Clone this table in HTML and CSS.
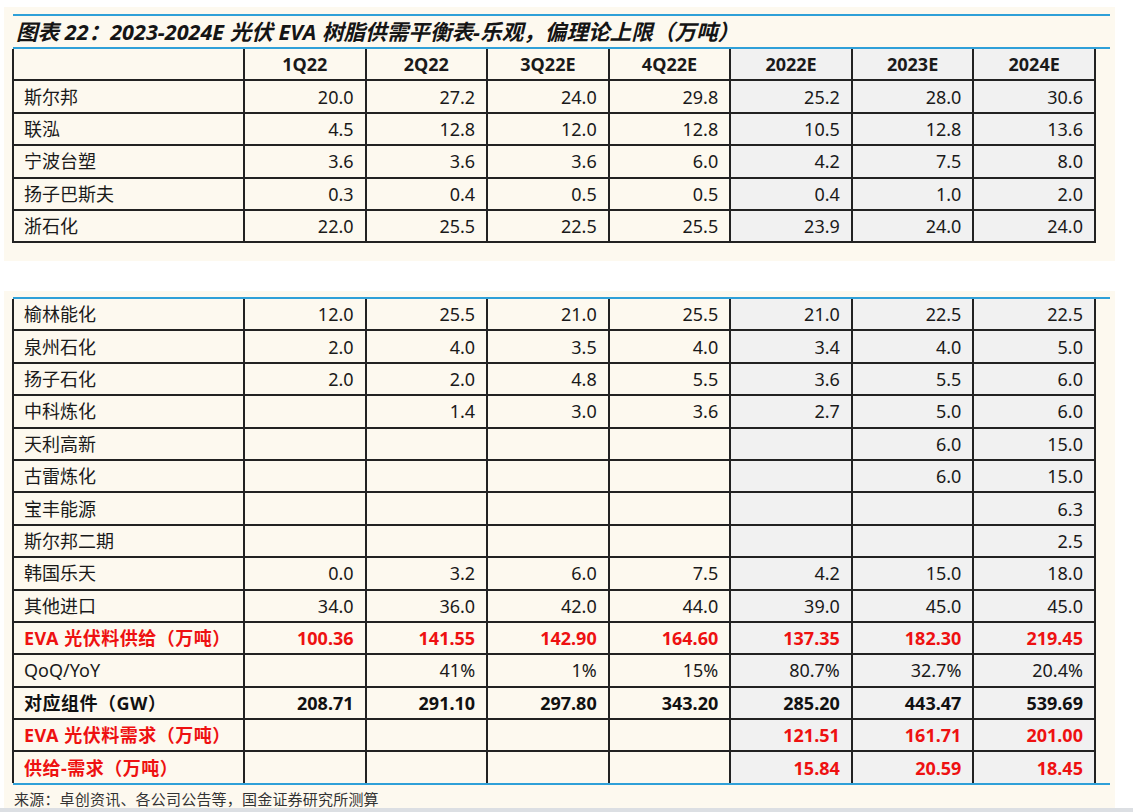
FILE: index.html
```html
<!DOCTYPE html>
<html lang="zh-CN">
<head>
<meta charset="utf-8">
<link rel="stylesheet" href="styles.css">
</head>
<body>
<section class="panel panel-top">
  <div class="frame">
    <h1 class="title">图表 22：2023-2024E 光伏 EVA 树脂供需平衡表-乐观，偏理论上限（万吨）</h1>
    <table class="grid">
      <colgroup><col class="c-name"><col><col><col><col><col><col><col></colgroup>
      <tr class="head"><td></td><td>1Q22</td><td>2Q22</td><td>3Q22E</td><td>4Q22E</td><td class="g">2022E</td><td class="g">2023E</td><td class="g">2024E</td></tr>
      <tr><td>斯尔邦</td><td>20.0</td><td>27.2</td><td>24.0</td><td>29.8</td><td class="g">25.2</td><td class="g">28.0</td><td class="g">30.6</td></tr>
      <tr><td>联泓</td><td>4.5</td><td>12.8</td><td>12.0</td><td>12.8</td><td class="g">10.5</td><td class="g">12.8</td><td class="g">13.6</td></tr>
      <tr><td>宁波台塑</td><td>3.6</td><td>3.6</td><td>3.6</td><td>6.0</td><td class="g">4.2</td><td class="g">7.5</td><td class="g">8.0</td></tr>
      <tr><td>扬子巴斯夫</td><td>0.3</td><td>0.4</td><td>0.5</td><td>0.5</td><td class="g">0.4</td><td class="g">1.0</td><td class="g">2.0</td></tr>
      <tr><td>浙石化</td><td>22.0</td><td>25.5</td><td>22.5</td><td>25.5</td><td class="g">23.9</td><td class="g">24.0</td><td class="g">24.0</td></tr>
    </table>
  </div>
</section>
<section class="panel panel-bottom">
  <div class="frame frame-bottom">
    <table class="grid">
      <colgroup><col class="c-name"><col><col><col><col><col><col><col></colgroup>
      <tr><td>榆林能化</td><td>12.0</td><td>25.5</td><td>21.0</td><td>25.5</td><td class="g">21.0</td><td class="g">22.5</td><td class="g">22.5</td></tr>
      <tr><td>泉州石化</td><td>2.0</td><td>4.0</td><td>3.5</td><td>4.0</td><td class="g">3.4</td><td class="g">4.0</td><td class="g">5.0</td></tr>
      <tr><td>扬子石化</td><td>2.0</td><td>2.0</td><td>4.8</td><td>5.5</td><td class="g">3.6</td><td class="g">5.5</td><td class="g">6.0</td></tr>
      <tr><td>中科炼化</td><td></td><td>1.4</td><td>3.0</td><td>3.6</td><td class="g">2.7</td><td class="g">5.0</td><td class="g">6.0</td></tr>
      <tr><td>天利高新</td><td></td><td></td><td></td><td></td><td class="g"></td><td class="g">6.0</td><td class="g">15.0</td></tr>
      <tr><td>古雷炼化</td><td></td><td></td><td></td><td></td><td class="g"></td><td class="g">6.0</td><td class="g">15.0</td></tr>
      <tr><td>宝丰能源</td><td></td><td></td><td></td><td></td><td class="g"></td><td class="g"></td><td class="g">6.3</td></tr>
      <tr><td>斯尔邦二期</td><td></td><td></td><td></td><td></td><td class="g"></td><td class="g"></td><td class="g">2.5</td></tr>
      <tr><td>韩国乐天</td><td>0.0</td><td>3.2</td><td>6.0</td><td>7.5</td><td class="g">4.2</td><td class="g">15.0</td><td class="g">18.0</td></tr>
      <tr><td>其他进口</td><td>34.0</td><td>36.0</td><td>42.0</td><td>44.0</td><td class="g">39.0</td><td class="g">45.0</td><td class="g">45.0</td></tr>
      <tr class="red"><td>EVA 光伏料供给（万吨）</td><td>100.36</td><td>141.55</td><td>142.90</td><td>164.60</td><td class="g">137.35</td><td class="g">182.30</td><td class="g">219.45</td></tr>
      <tr><td>QoQ/YoY</td><td></td><td>41%</td><td>1%</td><td>15%</td><td class="g">80.7%</td><td class="g">32.7%</td><td class="g">20.4%</td></tr>
      <tr class="bold"><td>对应组件（GW）</td><td>208.71</td><td>291.10</td><td>297.80</td><td>343.20</td><td class="g">285.20</td><td class="g">443.47</td><td class="g">539.69</td></tr>
      <tr class="red"><td>EVA 光伏料需求（万吨）</td><td></td><td></td><td></td><td></td><td class="g">121.51</td><td class="g">161.71</td><td class="g">201.00</td></tr>
      <tr class="red"><td>供给-需求（万吨）</td><td></td><td></td><td></td><td></td><td class="g">15.84</td><td class="g">20.59</td><td class="g">18.45</td></tr>
    </table>
  </div>
  <p class="source">来源：卓创资讯、各公司公告等，国金证券研究所测算</p>
</section>
<div class="strip"></div>
</body>
</html>
```
FILE: styles.css
```css
html, body {
  margin: 0;
  padding: 0;
  background: #ffffff;
}
body {
  width: 1133px;
  height: 812px;
  overflow: hidden;
  position: relative;
  font-family: "Noto Sans", "Noto Sans CJK SC", sans-serif;
  color: #1a1a1a;
}
.panel {
  background: #fdf9ef;
  margin-left: 4px;
  width: 1111px;
  box-sizing: border-box;
  padding-left: 9px;
}
.panel-top {
  margin-top: 7px;
  height: 254px;
  padding-top: 7px;
}
.panel-bottom {
  margin-top: 30px;
  height: 517px;
  padding-top: 6px;
}
.frame {
  width: 1097px;
  border-top: 2px solid #2fa0d8;
}
.frame-bottom {
  border-bottom: 2px solid #2fa0d8;
}
.title {
  margin: 0;
  height: 31px;
  line-height: 31px;
  font-size: 21.6px;
  font-weight: 700;
  font-style: italic;
  padding-left: 3px;
  border-bottom: 2px solid #2fa0d8;
  color: #151515;
  white-space: nowrap;
}
.grid {
  border-collapse: collapse;
  table-layout: fixed;
  width: 1082px;
  margin-left: -1px;
  font-size: 18px;
}
.grid col { width: 121.57px; }
.grid col.c-name { width: 231px; }
.grid td {
  border: 2px solid #222;
  height: 30.4px;
  padding: 0 11px 0 10px;
  text-align: right;
  vertical-align: middle;
  line-height: 24px;
  white-space: nowrap;
}
.grid tr:first-child td { border-top: none; }
.frame-bottom .grid tr:last-child td { border-bottom: none; }
.grid td:first-child { text-align: left; }
.grid td.g { background: #f1f1f1; }
.grid tr.head td {
  text-align: center;
  font-weight: 700;
  padding: 0;
}
.grid tr.red td {
  color: #ee1111;
  font-weight: 700;
}
.grid tr.red td:first-child,
.grid tr.bold td:first-child {
  letter-spacing: 0.5px;
}
.grid tr.bold td {
  font-weight: 700;
  color: #111;
}
.source {
  margin: 4px 0 0 1px;
  font-size: 15px;
  line-height: 20px;
  color: #333;
  letter-spacing: 0.2px;
}
.strip {
  position: absolute;
  left: 0;
  bottom: 0;
  width: 1133px;
  height: 4px;
  background: #dcdfe3;
}
```
